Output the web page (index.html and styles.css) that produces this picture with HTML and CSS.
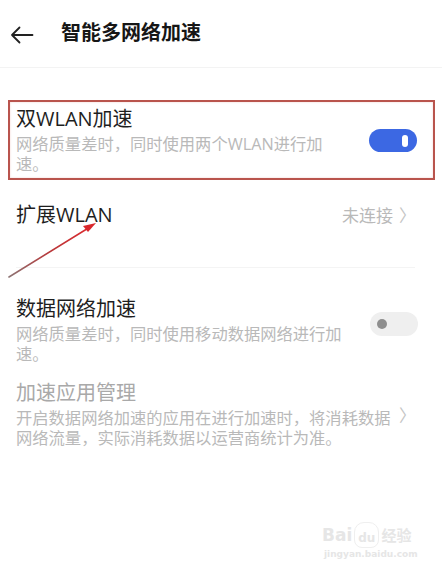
FILE: index.html
```html
<!DOCTYPE html>
<html lang="zh-CN">
<head>
<meta charset="utf-8">
<title>智能多网络加速</title>
<link rel="stylesheet" href="styles.css">
</head>
<body>
<div class="page">
  <header class="header">
    <svg class="back" width="24" height="18" viewBox="0 0 24 18"><path d="M22.5 9H2M9.5 1.5L2 9l7.5 7.5" fill="none" stroke="#222" stroke-width="1.8" stroke-linecap="round" stroke-linejoin="round"/></svg>
    <h1 class="title">智能多网络加速</h1>
  </header>

  <section class="row row-highlight">
    <div class="text">
      <div class="row-title">双WLAN加速</div>
      <div class="row-sub">网络质量差时，同时使用两个WLAN进行加<br>速。</div>
    </div>
    <div class="switch switch-on"><span class="knob-on"></span></div>
  </section>

  <section class="row row-link">
    <div class="row-title">扩展WLAN</div>
    <div class="value">未连接<span class="chev">〉</span></div>
  </section>
  <div class="divider"></div>

  <section class="row row-data">
    <div class="text">
      <div class="row-title">数据网络加速</div>
      <div class="row-sub">网络质量差时，同时使用移动数据网络进行加<br>速。</div>
    </div>
    <div class="switch switch-off"><span class="knob-off"></span></div>
  </section>

  <section class="row row-apps">
    <div class="text">
      <div class="row-title disabled">加速应用管理</div>
      <div class="row-sub">开启数据网络加速的应用在进行加速时，将消耗数据<br>网络流量，实际消耗数据以运营商统计为准。</div>
    </div>
    <span class="chev chev-apps">〉</span>
  </section>

  <svg class="annot-arrow" width="110" height="70" viewBox="0 0 110 70">
    <defs>
      <linearGradient id="ag" x1="0" y1="1" x2="1" y2="0">
        <stop offset="0" stop-color="#8d7474"/>
        <stop offset="0.5" stop-color="#b8383a"/>
        <stop offset="1" stop-color="#dd2a2e"/>
      </linearGradient>
    </defs>
    <line x1="9" y1="66" x2="90" y2="16" stroke="url(#ag)" stroke-width="1.6" stroke-linecap="round"/>
    <polygon points="96,12 83,15 88,21" fill="#d9272c"/>
  </svg>

  <div class="watermark">
    <div class="wm-logo"><span>Bai</span><span class="paw">du</span><span class="wm-cn">经验</span></div>
    <div class="wm-url">jingyan.baidu.com</div>
  </div>
</div>
</body>
</html>
```

FILE: styles.css
```css
* { box-sizing: border-box; }
html, body { margin: 0; padding: 0; background: #fff; }
body {
  font-family: "Open Sans", "Noto Sans CJK SC", sans-serif;
  color: #1c1c1c;
}
.page {
  position: relative;
  width: 442px;
  height: 576px;
  overflow: hidden;
}
.header {
  height: 68px;
  display: flex;
  align-items: center;
  border-bottom: 1px solid #f3f3f3;
  padding-left: 10px;
}
.back { margin-top: 2px; }
.title {
  margin: 0 0 0 27px;
  font-family: "Noto Sans CJK SC", sans-serif;
  font-size: 20px;
  font-weight: 700;
  line-height: 26px;
  color: #161616;
  padding-bottom: 3px;
}
.row {
  display: flex;
  align-items: center;
  justify-content: space-between;
}
.text { display: flex; flex-direction: column; }
.row-title {
  font-size: 20px;
  line-height: 26px;
  color: #1e1e1e;
  white-space: nowrap;
}
.row-title.disabled { color: #a9a9a9; }
.row-sub {
  font-size: 16.3px;
  line-height: 20px;
  color: #b9b9b9;
  white-space: nowrap;
  margin-top: 2px;
}
.row-highlight {
  margin: 32px 7px 0 8px;
  height: 80px;
  border: 2px solid #b9544d;
  box-shadow: inset 0 0 2px rgba(220, 130, 120, 0.4);
  padding: 2px 16px 2px 6px;
}
.switch {
  width: 48px;
  height: 23px;
  border-radius: 12px;
  display: flex;
  align-items: center;
  flex-shrink: 0;
}
.switch-on {
  background: #3c68e3;
  justify-content: flex-end;
  padding-right: 9px;
  margin-top: 1px;
}
.knob-on {
  width: 6px;
  height: 12px;
  border-radius: 3px;
  background: #fff;
}
.switch-off {
  background: #efefef;
  padding-left: 7px;
  height: 24px;
  margin-top: -12px;
}
.knob-off {
  width: 10px;
  height: 10px;
  border-radius: 50%;
  background: #8e8e8e;
}
.row-link {
  height: 87px;
  padding: 22px 26px 0 16px;
  align-items: flex-start;
}
.value {
  font-family: "Noto Sans CJK SC", sans-serif;
  font-size: 17px;
  line-height: 26px;
  color: #b9b9b9;
  display: flex;
  align-items: center;
}
.chev {
  font-family: "Noto Sans CJK SC", sans-serif;
  font-size: 17px;
  color: #c4c4c4;
  margin-left: 6px;
}
.divider {
  height: 1px;
  background: #f4f4f4;
  margin: 0 27px 0 16px;
}
.row-data {
  padding: 28px 24px 0 16px;
}
.row-apps {
  padding: 16px 26px 0 16px;
}
.annot-arrow {
  position: absolute;
  left: 0;
  top: 211px;
}
.watermark {
  position: absolute;
  left: 322px;
  top: 522px;
  color: #e6e6e6;
  font-family: "DejaVu Sans", sans-serif;
}
.wm-logo {
  display: flex;
  align-items: flex-end;
  font-size: 17px;
  font-weight: 700;
  line-height: 26px;
}
.paw {
  font-size: 12px;
  line-height: 18px;
  padding: 6px 3px 0;
  border-radius: 10px 10px 8px 8px;
  border: 1px solid #efefef;
  margin: 0 2px;
}
.wm-cn {
  font-family: "Noto Sans CJK SC", sans-serif;
  font-size: 15px;
}
.wm-url {
  font-size: 9px;
  line-height: 12px;
  font-weight: 700;
  margin-left: 2px;
}
```
